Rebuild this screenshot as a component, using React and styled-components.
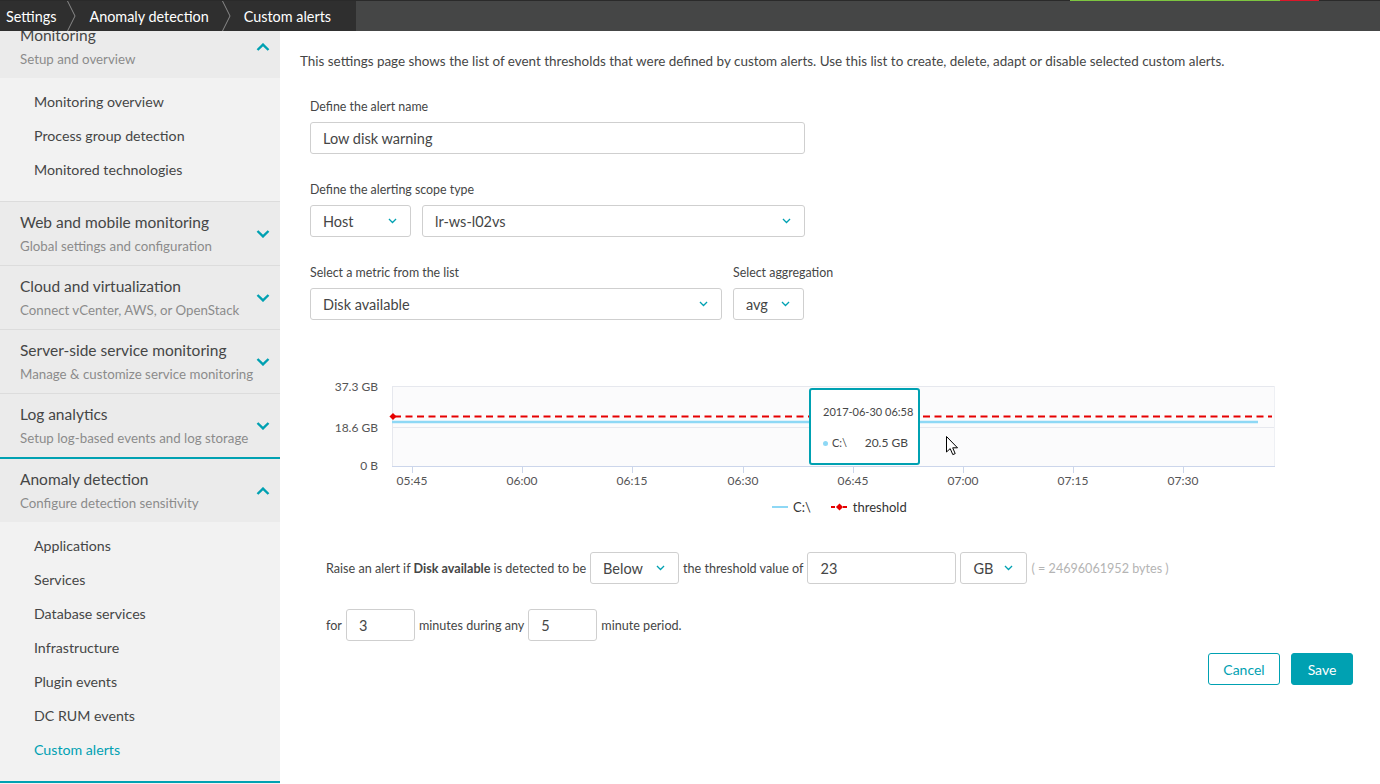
import React from "react";
import styled, { createGlobalStyle } from "styled-components";

const Global = createGlobalStyle`
  html, body { margin: 0; padding: 0; }
  body {
    font-family: Lato, "Liberation Sans", sans-serif;
    color: #454646;
    background: #fff;
    overflow: hidden;
  }
  * { box-sizing: border-box; }
`;

const TEAL = "#00a1b2";

const Page = styled.div`
  width: 1380px;
  height: 784px;
  display: flex;
  flex-direction: column;
  overflow: hidden;
`;

const TopBar = styled.header`
  height: 31px;
  flex: none;
  display: flex;
  flex-direction: column;
  background: #454646;
`;

const StatusStrip = styled.div`
  height: 1px;
  display: flex;
  background: #2a2a2a;
`;

const StripSeg = styled.div`
  width: ${(p) => p.$w}px;
  background: ${(p) => p.$c};
`;

const BarRow = styled.div`
  flex: 1;
  display: flex;
`;

const Crumbs = styled.nav`
  display: flex;
  align-items: stretch;
  background: #2f2f2f;
  padding-right: 14px;
`;

const Crumb = styled.span`
  display: flex;
  align-items: center;
  color: #fff;
  font-size: 14.4px;
  padding: 0 ${(p) => (p.$first ? 9 : 11)}px 0 ${(p) => (p.$first ? 6 : 12)}px;
  white-space: nowrap;
`;

const Sep = () => (
  <svg width="12" height="30" viewBox="0 0 12 30" style={{ flex: "none" }}>
    <polyline points="2,-1 10,15 2,31" fill="none" stroke="#8a8a8a" strokeWidth="1" />
  </svg>
);

const Body = styled.div`
  flex: 1;
  min-height: 0;
  display: flex;
`;

const Sidebar = styled.aside`
  width: 280px;
  flex: none;
  background: #f2f2f2;
  overflow: hidden;
`;

const SideInner = styled.div`
  margin-top: -17px;
`;

const Group = styled.section`
  border-top: ${(p) => (p.$active ? `2px solid ${TEAL}` : "1px solid #dcdcdc")};
  border-bottom: ${(p) => (p.$last ? `2px solid ${TEAL}` : "none")};
`;

const GroupHead = styled.div`
  background: #ebebeb;
  display: flex;
  align-items: center;
  justify-content: space-between;
  padding: 9px 10px 9px 20px;
`;

const HeadText = styled.div`
  display: flex;
  flex-direction: column;
`;

const HeadTitle = styled.div`
  font-size: 15.5px;
  line-height: 22px;
  color: #454646;
`;

const HeadSub = styled.div`
  font-size: 13.3px;
  line-height: 20px;
  margin-top: 3px;
  color: #8b8b8b;
  white-space: nowrap;
`;

const SubList = styled.ul`
  list-style: none;
  margin: 0;
  padding: 7px 0 14px;
  background: #f2f2f2;
`;

const SubItem = styled.li`
  font-size: 14.2px;
  line-height: 34px;
  padding-left: 34px;
  color: ${(p) => (p.$active ? TEAL : "#454646")};
`;

const Chevron = ({ up, w = 14, h = 8, sw = 2.4 }) => (
  <svg width={w} height={h} viewBox="0 0 14 8" style={{ flex: "none" }}>
    <polyline
      points={up ? "1.5,7 7,1.6 12.5,7" : "1.5,1 7,6.4 12.5,1"}
      fill="none"
      stroke={TEAL}
      strokeWidth={sw}
    />
  </svg>
);

const groups = [
  {
    title: "Monitoring",
    sub: "Setup and overview",
    open: true,
    items: ["Monitoring overview", "Process group detection", "Monitored technologies"],
  },
  { title: "Web and mobile monitoring", sub: "Global settings and configuration" },
  { title: "Cloud and virtualization", sub: "Connect vCenter, AWS, or OpenStack" },
  { title: "Server-side service monitoring", sub: "Manage & customize service monitoring" },
  { title: "Log analytics", sub: "Setup log-based events and log storage" },
  {
    title: "Anomaly detection",
    sub: "Configure detection sensitivity",
    open: true,
    active: true,
    items: [
      "Applications",
      "Services",
      "Database services",
      "Infrastructure",
      "Plugin events",
      "DC RUM events",
      "Custom alerts",
    ],
  },
];

const Main = styled.main`
  flex: 1;
  padding: 20px 27px 0 20px;
  display: flex;
  flex-direction: column;
`;

const Intro = styled.p`
  margin: 0;
  font-size: 13.45px;
  line-height: 20px;
  color: #454646;
  white-space: nowrap;
`;

const Form = styled.div`
  padding-left: 10px;
  margin-top: 28px;
  display: flex;
  flex-direction: column;
`;

const FieldRow = styled.div`
  display: flex;
  gap: 11px;
  margin-bottom: 28px;
`;

const Field = styled.div`
  display: flex;
  flex-direction: column;
`;

const Label = styled.label`
  font-size: 12.4px;
  line-height: 16px;
  margin-bottom: 7px;
  color: #454646;
`;

const Controls = styled.div`
  display: flex;
  gap: 11px;
`;

const TextBox = styled.div`
  width: ${(p) => p.$w}px;
  height: 32px;
  border: 1px solid #cfcfcf;
  border-radius: 3px;
  background: #fff;
  display: flex;
  align-items: center;
  padding: 0 12px;
  font-size: 14.5px;
  color: #454646;
  flex: none;
`;

const SelectBox = styled(TextBox)`
  justify-content: space-between;
  padding-right: 13px;
`;

const Select = ({ w, children }) => (
  <SelectBox $w={w}>
    <span>{children}</span>
    <Chevron w={9} h={6} sw={2} />
  </SelectBox>
);

const ChartWrap = styled.div`
  position: relative;
  margin: 27px 0 0 20px;
  width: 960px;
`;

const Tooltip = styled.div`
  position: absolute;
  left: 489px;
  top: 13px;
  width: 111px;
  height: 77px;
  border: 2px solid ${TEAL};
  border-radius: 3px;
  background: #fff;
  padding: 14px 10px 0 12px;
  display: flex;
  flex-direction: column;
  white-space: nowrap;
`;

const TipDate = styled.div`
  font-size: 11px;
  line-height: 16px;
  color: #454646;
`;

const TipRow = styled.div`
  display: flex;
  align-items: center;
  justify-content: space-between;
  margin-top: 15px;
  font-size: 12px;
  line-height: 16px;
`;

const TipSeries = styled.span`
  display: flex;
  align-items: center;
  gap: 4px;
  font-size: 11px;
  &::before {
    content: "";
    width: 5px;
    height: 5px;
    border-radius: 50%;
    background: #8ed8f5;
  }
`;

const Cursor = styled.svg`
  position: absolute;
  left: 626px;
  top: 61px;
`;

const Legend = styled.div`
  display: flex;
  gap: 20px;
  padding-left: 472px;
  margin-top: 6px;
  font-size: 13px;
  line-height: 16px;
  color: #333;
`;

const LegendItem = styled.span`
  display: flex;
  align-items: center;
  gap: 5px;
`;

const Condition = styled.div`
  display: flex;
  align-items: center;
  gap: 4px;
  padding-left: 26px;
  font-size: 12.6px;
  color: #454646;
  margin-top: ${(p) => p.$mt}px;
  white-space: nowrap;
`;

const Hint = styled.span`
  color: #b4b4b4;
`;

const Actions = styled.div`
  display: flex;
  justify-content: flex-end;
  gap: 11px;
  margin-top: 12px;
`;

const Button = styled.button`
  height: 32px;
  width: ${(p) => p.$w}px;
  border-radius: 3px;
  font-family: inherit;
  font-size: 14px;
  border: 1px solid ${TEAL};
  background: ${(p) => (p.$primary ? TEAL : "#fff")};
  color: ${(p) => (p.$primary ? "#fff" : TEAL)};
  padding: 0;
`;

const xTicks = [
  [92, "05:45"],
  [202, "06:00"],
  [312, "06:15"],
  [423, "06:30"],
  [533, "06:45"],
  [643, "07:00"],
  [753, "07:15"],
  [863, "07:30"],
];

const Chart = () => (
  <svg width="960" height="118" viewBox="0 0 960 118" style={{ display: "block" }}>
    <rect x="72" y="11" width="883" height="80" fill="#fbfbfc" />
    <line x1="72" y1="11.5" x2="955" y2="11.5" stroke="#e6e8ee" />
    <line x1="72" y1="52.5" x2="955" y2="52.5" stroke="#e6e8ee" />
    <line x1="72.5" y1="11" x2="72.5" y2="91" stroke="#e6e8ee" />
    <line x1="954.5" y1="11" x2="954.5" y2="91" stroke="#eef0f4" />
    <line x1="72" y1="91.5" x2="955" y2="91.5" stroke="#ccd6eb" />
    {xTicks.map(([x, t]) => (
      <g key={t}>
        <line x1={x + 0.5} y1="91" x2={x + 0.5} y2="98" stroke="#ccd6eb" />
        <text x={x} y="110" textAnchor="middle" fontSize="12" fill="#555" fontFamily="Lato, sans-serif">
          {t}
        </text>
      </g>
    ))}
    <g fontSize="12" fill="#555" fontFamily="Lato, sans-serif" textAnchor="end">
      <text x="58" y="16">37.3 GB</text>
      <text x="58" y="57">18.6 GB</text>
      <text x="58" y="95">0 B</text>
    </g>
    <line x1="72" y1="47" x2="938" y2="47" stroke="#8ed8f5" strokeWidth="2.5" />
    <line x1="74" y1="41.5" x2="952" y2="41.5" stroke="#e60000" strokeWidth="2" strokeDasharray="7 4.5" />
    <rect x="70.5" y="39" width="5" height="5" fill="#e60000" transform="rotate(45 73 41.5)" />
  </svg>
);

export default function App() {
  return (
    <Page>
      <Global />
      <TopBar>
        <StatusStrip>
          <StripSeg $w={1070} $c="#2a2a2a" />
          <StripSeg $w={210} $c="#7dc540" />
          <StripSeg $w={39} $c="#dc172a" />
        </StatusStrip>
        <BarRow>
          <Crumbs>
            <Crumb $first>Settings</Crumb>
            <Sep />
            <Crumb>Anomaly detection</Crumb>
            <Sep />
            <Crumb>Custom alerts</Crumb>
          </Crumbs>
        </BarRow>
      </TopBar>
      <Body>
        <Sidebar>
          <SideInner>
            {groups.map((g) => (
              <Group key={g.title} $active={g.active} $last={g.active}>
                <GroupHead>
                  <HeadText>
                    <HeadTitle>{g.title}</HeadTitle>
                    <HeadSub>{g.sub}</HeadSub>
                  </HeadText>
                  <Chevron up={g.open} />
                </GroupHead>
                {g.items && (
                  <SubList>
                    {g.items.map((it) => (
                      <SubItem key={it} $active={it === "Custom alerts"}>
                        {it}
                      </SubItem>
                    ))}
                  </SubList>
                )}
              </Group>
            ))}
          </SideInner>
        </Sidebar>
        <Main>
          <Intro>
            This settings page shows the list of event thresholds that were defined by custom alerts. Use this
            list to create, delete, adapt or disable selected custom alerts.
          </Intro>
          <Form>
            <FieldRow>
              <Field>
                <Label>Define the alert name</Label>
                <TextBox $w={495}>Low disk warning</TextBox>
              </Field>
            </FieldRow>
            <FieldRow>
              <Field>
                <Label>Define the alerting scope type</Label>
                <Controls>
                  <Select w={101}>Host</Select>
                  <Select w={383}>lr-ws-l02vs</Select>
                </Controls>
              </Field>
            </FieldRow>
            <FieldRow>
              <Field>
                <Label>Select a metric from the list</Label>
                <Select w={412}>Disk available</Select>
              </Field>
              <Field>
                <Label>Select aggregation</Label>
                <Select w={71}>avg</Select>
              </Field>
            </FieldRow>
          </Form>
          <ChartWrap>
            <Chart />
            <Tooltip>
              <TipDate>2017-06-30 06:58</TipDate>
              <TipRow>
                <TipSeries>C:\</TipSeries>
                <span>20.5 GB</span>
              </TipRow>
            </Tooltip>
            <Cursor width="13" height="20" viewBox="0 0 13 20">
              <path d="M0.5,0.5 L0.5,16 L4.2,12.6 L6.8,18.6 L9.2,17.6 L6.7,11.8 L11.5,11.8 Z" fill="#fff" stroke="#000" strokeWidth="1" />
            </Cursor>
          </ChartWrap>
          <Legend>
            <LegendItem>
              <svg width="16" height="8" viewBox="0 0 16 8">
                <line x1="0" y1="4" x2="16" y2="4" stroke="#8ed8f5" strokeWidth="2" />
              </svg>
              C:\
            </LegendItem>
            <LegendItem>
              <svg width="17" height="8" viewBox="0 0 17 8">
                <line x1="0" y1="4" x2="17" y2="4" stroke="#e60000" strokeWidth="2" strokeDasharray="4 2" />
                <rect x="6" y="1.5" width="5" height="5" fill="#e60000" transform="rotate(45 8.5 4)" />
              </svg>
              threshold
            </LegendItem>
          </Legend>
          <Condition $mt={37}>
            <span>
              Raise an alert if <b>Disk available</b> is detected to be
            </span>
            <Select w={89}>Below</Select>
            <span>the threshold value of</span>
            <TextBox $w={149}>23</TextBox>
            <Select w={67}>GB</Select>
            <Hint>( = 24696061952 bytes )</Hint>
          </Condition>
          <Condition $mt={25}>
            <span>for</span>
            <TextBox $w={69}>3</TextBox>
            <span>minutes during any</span>
            <TextBox $w={69}>5</TextBox>
            <span>minute period.</span>
          </Condition>
          <Actions>
            <Button $w={72}>Cancel</Button>
            <Button $w={62} $primary>
              Save
            </Button>
          </Actions>
        </Main>
      </Body>
    </Page>
  );
}
